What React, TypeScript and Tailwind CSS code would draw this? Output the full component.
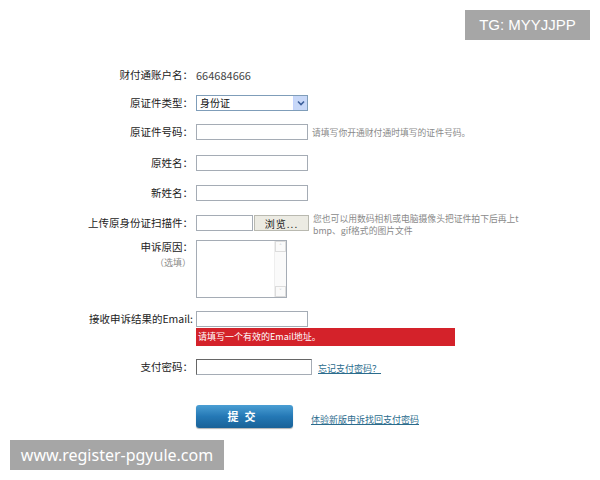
const labelCls =
  "w-[196px] shrink-0 pr-[3px] text-right text-[10.5px] leading-[16px] text-[#222]";
const inputCls = "h-[16px] border border-[#a5acb5] bg-white";
const hintCls = "text-[8.8px] leading-[12px] text-[#8a8a8a]";

const Chevron = () => (
  <svg width="8" height="6" viewBox="0 0 8 6">
    <path d="M1 1.5 L4 4.5 L7 1.5" stroke="#3d5f9a" strokeWidth="1.6" fill="none" />
  </svg>
);

const App = () => {
  return (
    <div
      className="relative h-[480px] w-[600px] overflow-hidden bg-white"
      style={{ fontFamily: '"Noto Sans CJK SC", "Noto Sans", sans-serif' }}
    >
      <div className="flex flex-col pt-[67px]">
        {/* 账户名 */}
        <div className="flex h-[16px] items-center">
          <div className={labelCls}>财付通账户名：</div>
          <div className="text-[11px] text-[#444]">664684666</div>
        </div>

        {/* 证件类型 */}
        <div className="mt-[12px] flex items-center">
          <div className={labelCls}>原证件类型：</div>
          <div className="flex h-[16px] w-[112px] items-center border border-[#7f9db9] bg-white">
            <span className="flex-1 pl-[3px] text-[10px] leading-[14px] text-[#111]">身份证</span>
            <span className="flex h-[14px] w-[14px] items-center justify-center border-l border-[#c3d3fd] bg-[#c8d8f8]">
              <Chevron />
            </span>
          </div>
        </div>

        {/* 证件号码 */}
        <div className="mt-[13px] flex items-center">
          <div className={labelCls}>原证件号码：</div>
          <div className={`${inputCls} w-[112px]`} />
          <div className={`${hintCls} ml-[4px] mt-[2px]`}>请填写你开通财付通时填写的证件号码。</div>
        </div>

        {/* 原姓名 */}
        <div className="mt-[15px] flex items-center">
          <div className={labelCls}>原姓名：</div>
          <div className={`${inputCls} w-[112px]`} />
        </div>

        {/* 新姓名 */}
        <div className="mt-[14px] flex items-center">
          <div className={labelCls}>新姓名：</div>
          <div className={`${inputCls} w-[112px]`} />
        </div>

        {/* 上传 */}
        <div className="mt-[14px] flex h-[16px] items-start">
          <div className={labelCls}>上传原身份证扫描件：</div>
          <div className={`${inputCls} w-[57px]`} />
          <div className="ml-[1px] flex h-[16px] w-[55px] items-center justify-center border border-[#b9b9b0] bg-[#ecebe3] text-[10px] tracking-[1px] text-[#222]">
            浏览...
          </div>
          <div className={`${hintCls} ml-[4px] mt-[-2px] w-[230px] overflow-hidden`}>
            <div className="whitespace-nowrap">您也可以用数码相机或电脑摄像头把证件拍下后再上t</div>
            <div className="whitespace-nowrap">bmp、gif格式的图片文件</div>
          </div>
        </div>

        {/* 申诉原因 */}
        <div className="mt-[9px] flex items-start">
          <div className="w-[196px] shrink-0 pr-[3px] text-right">
            <div className="text-[10.5px] leading-[14px] text-[#222]">申诉原因：</div>
            <div className="mt-[3px] pr-[2px] text-[9px] leading-[12px] text-[#8a8a8a]">（选填）</div>
          </div>
          <div className="flex h-[58px] w-[91px] border border-[#a5acb5] bg-white">
            <div className="flex-1" />
            <div className="flex w-[12px] flex-col justify-between border-l border-[#eeeeee] bg-[#fafafa]">
              <div className="flex h-[11px] items-center justify-center border border-[#dcdcdc] text-[7px] leading-none text-[#aaa]">
                ˄
              </div>
              <div className="flex h-[11px] items-center justify-center border border-[#dcdcdc] text-[7px] leading-none text-[#aaa]">
                ˅
              </div>
            </div>
          </div>
        </div>

        {/* Email */}
        <div className="mt-[13px] flex items-center">
          <div className={labelCls}>接收申诉结果的Email:</div>
          <div className={`${inputCls} w-[112px]`} />
        </div>
        <div className="mt-[1px] flex">
          <div className="w-[196px] shrink-0" />
          <div className="flex h-[18px] w-[259px] items-center bg-[#d4222a] pl-[2px] text-[9px] text-white">
            请填写一个有效的Email地址。
          </div>
        </div>

        {/* 支付密码 */}
        <div className="mt-[12px] flex items-center">
          <div className={labelCls}>支付密码：</div>
          <div className="h-[16px] w-[116px] border border-[#a5acb5] border-l-[#666] border-t-[#666] bg-white" />
          <a className="ml-[6px] mt-[4px] text-[9px] text-[#2b6c8d] underline">忘记支付密码？</a>
        </div>

        {/* 提交 */}
        <div className="mt-[29px] flex items-center">
          <div className="w-[196px] shrink-0" />
          <button className="flex h-[23px] w-[97px] items-center justify-center rounded-[3px] bg-gradient-to-b from-[#4a9fd4] via-[#2478b5] to-[#1a6298] text-[11px] font-bold tracking-[6px] text-white shadow-[0_1px_1px_rgba(0,0,0,0.3)]">
            提交
          </button>
          <a className="ml-[18px] mt-[8px] text-[9px] text-[#2b6c8d] underline">体验新版申诉找回支付密码</a>
        </div>
      </div>

      {/* watermarks */}
      <div
        className="absolute left-[465px] top-[10px] flex h-[30px] w-[125px] items-center justify-center bg-[#a6a6a6] text-[15px] text-white"
        style={{ fontFamily: '"Liberation Sans", sans-serif' }}
      >
        TG: MYYJJPP
      </div>
      <div
        className="absolute left-[10px] top-[440px] flex h-[30px] w-[214px] items-center justify-center bg-[#a6a6a6] text-[16px] text-white"
        style={{ fontFamily: '"Noto Sans", sans-serif' }}
      >
        www.register-pgyule.com
      </div>
    </div>
  );
};

export default App;
